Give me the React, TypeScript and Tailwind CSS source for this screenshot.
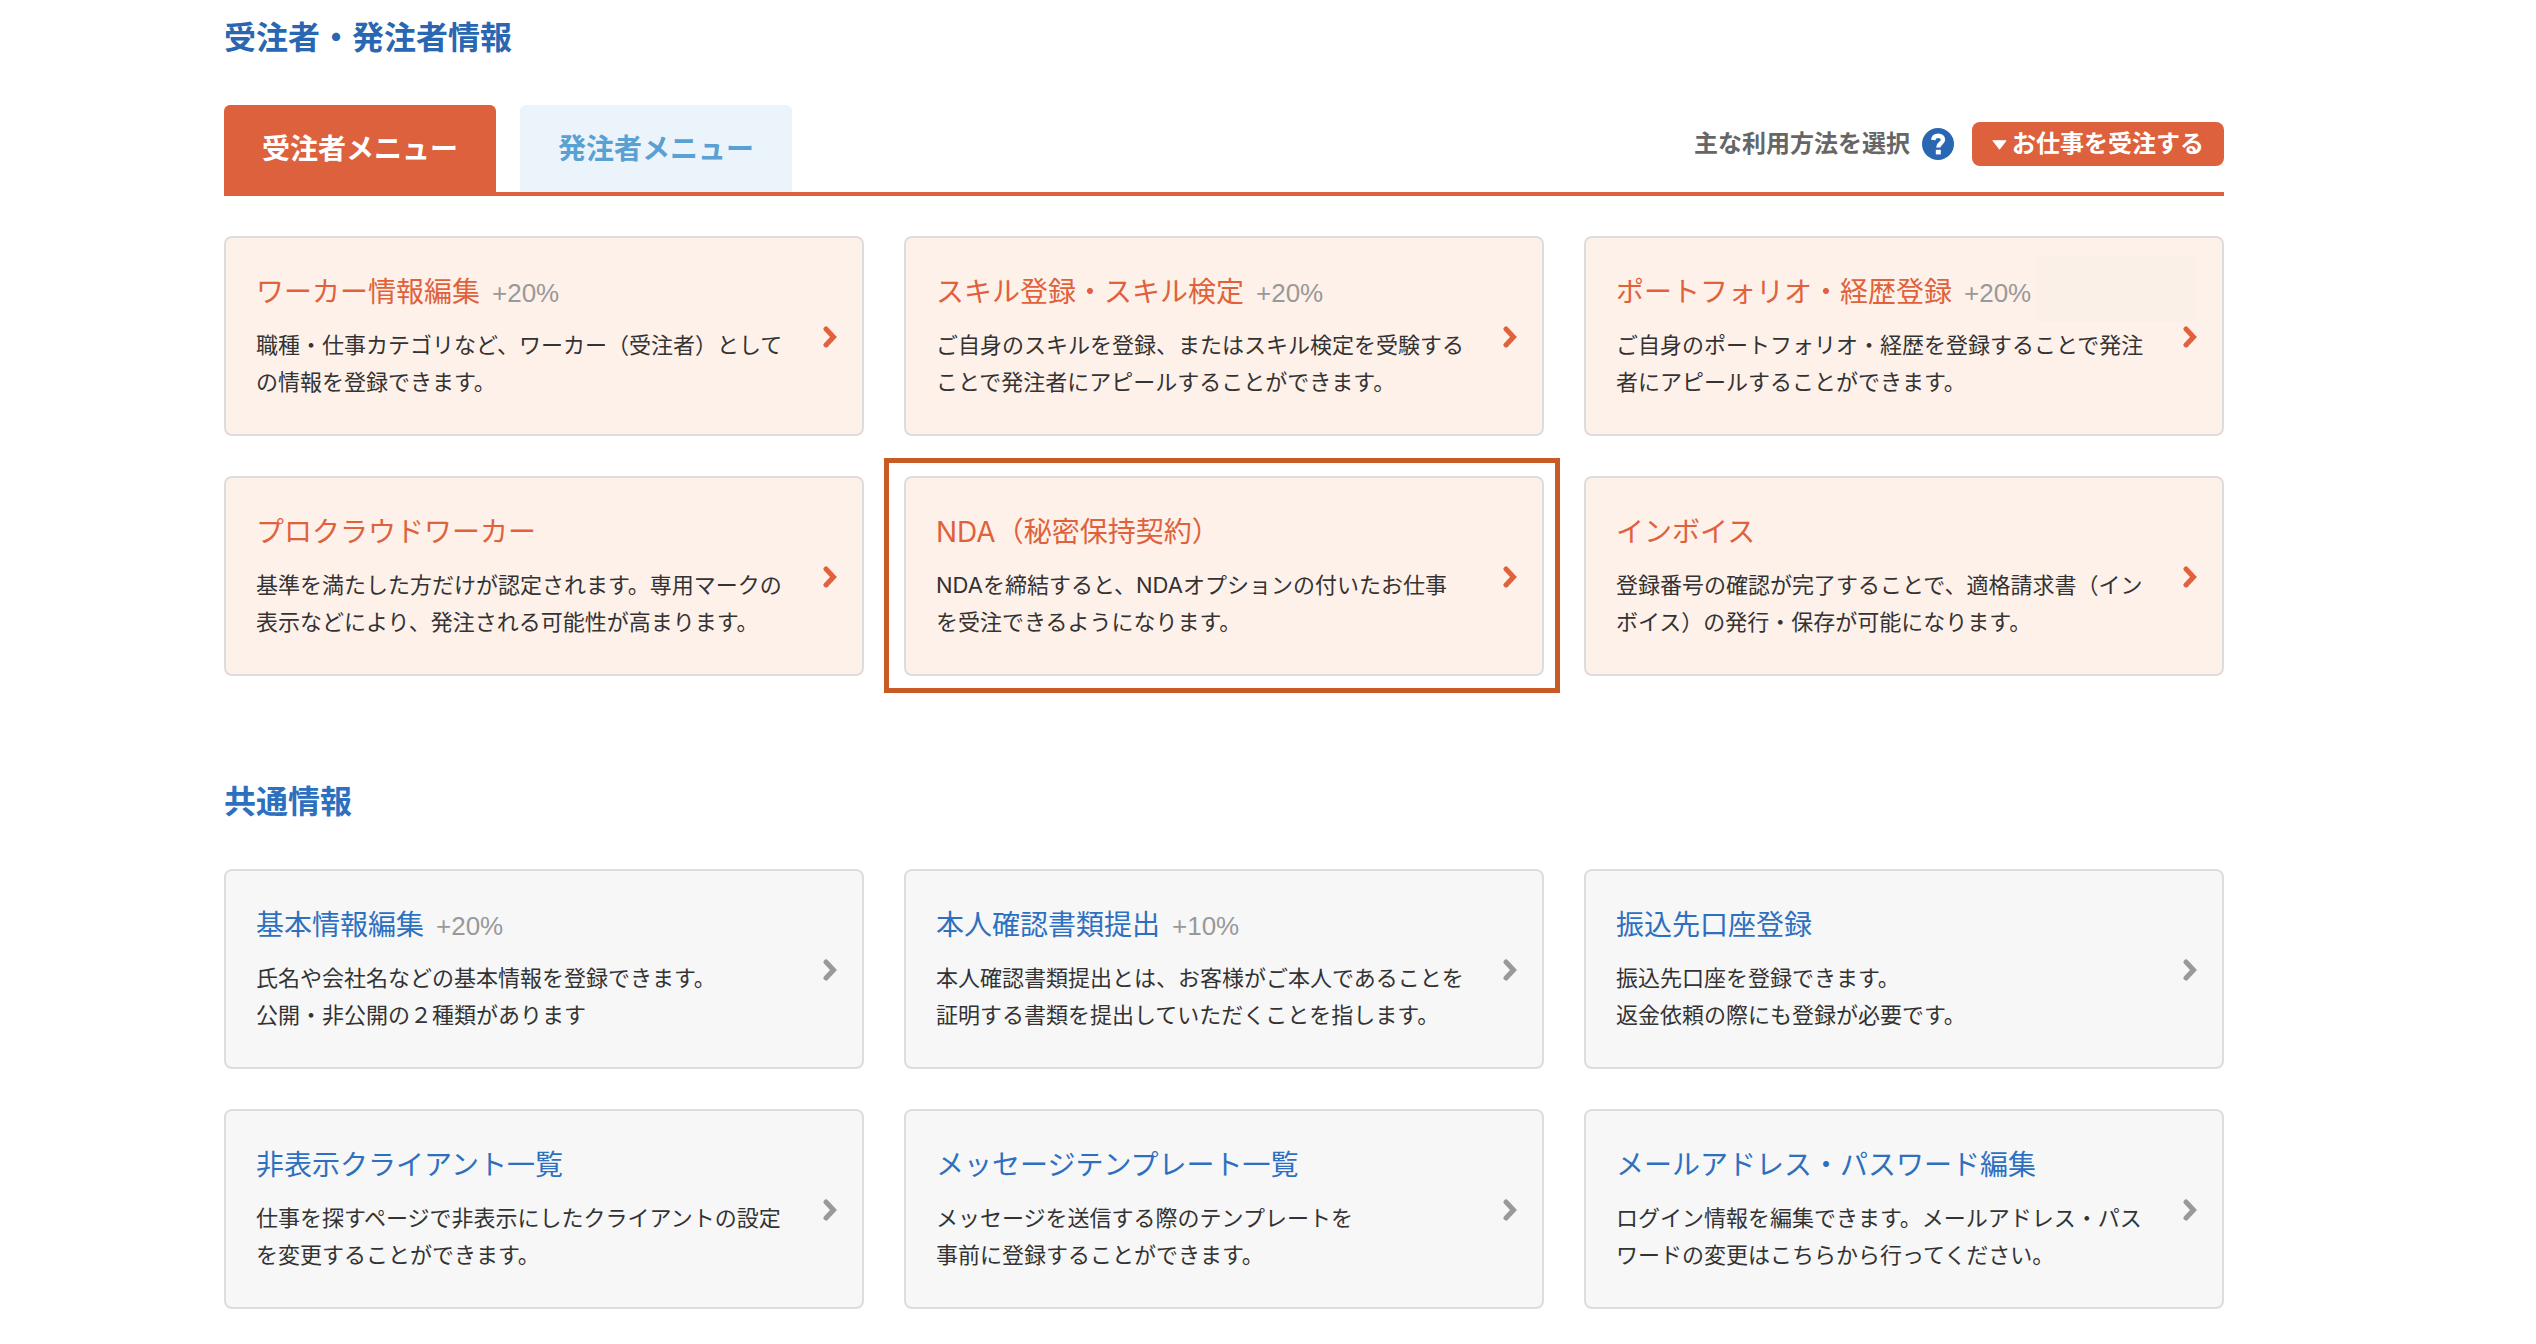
import { useState } from 'react';
import clsx from 'clsx';

type CardItem = {
  title: string;
  lines: string[];
  rate?: string;
  patch?: boolean;
  highlighted?: boolean;
};

const WORKER_ITEMS: CardItem[] = [
  {
    title: 'ワーカー情報編集',
    rate: '+20%',
    lines: ['職種・仕事カテゴリなど、ワーカー（受注者）として', 'の情報を登録できます。'],
  },
  {
    title: 'スキル登録・スキル検定',
    rate: '+20%',
    lines: ['ご自身のスキルを登録、またはスキル検定を受験する', 'ことで発注者にアピールすることができます。'],
  },
  {
    title: 'ポートフォリオ・経歴登録',
    rate: '+20%',
    patch: true,
    lines: ['ご自身のポートフォリオ・経歴を登録することで発注', '者にアピールすることができます。'],
  },
  {
    title: 'プロクラウドワーカー',
    lines: ['基準を満たした方だけが認定されます。専用マークの', '表示などにより、発注される可能性が高まります。'],
  },
  {
    title: 'NDA（秘密保持契約）',
    highlighted: true,
    lines: ['NDAを締結すると、NDAオプションの付いたお仕事', 'を受注できるようになります。'],
  },
  {
    title: 'インボイス',
    lines: ['登録番号の確認が完了することで、適格請求書（イン', 'ボイス）の発行・保存が可能になります。'],
  },
];

const COMMON_ITEMS: CardItem[] = [
  {
    title: '基本情報編集',
    rate: '+20%',
    lines: ['氏名や会社名などの基本情報を登録できます。', '公開・非公開の２種類があります'],
  },
  {
    title: '本人確認書類提出',
    rate: '+10%',
    lines: ['本人確認書類提出とは、お客様がご本人であることを', '証明する書類を提出していただくことを指します。'],
  },
  {
    title: '振込先口座登録',
    lines: ['振込先口座を登録できます。', '返金依頼の際にも登録が必要です。'],
  },
  {
    title: '非表示クライアント一覧',
    lines: ['仕事を探すページで非表示にしたクライアントの設定', 'を変更することができます。'],
  },
  {
    title: 'メッセージテンプレート一覧',
    lines: ['メッセージを送信する際のテンプレートを', '事前に登録することができます。'],
  },
  {
    title: 'メールアドレス・パスワード編集',
    lines: ['ログイン情報を編集できます。メールアドレス・パス', 'ワードの変更はこちらから行ってください。'],
  },
];

const TABS = ['受注者メニュー', '発注者メニュー'];

function Chevron() {
  return (
    <svg viewBox="0 0 14 22" className="w-[14px] h-[22px] shrink-0" fill="none" aria-hidden="true">
      <path d="M3 3 L10.5 11 L3 19" stroke="currentColor" strokeWidth="5" strokeLinecap="round" />
    </svg>
  );
}

function MenuCard({ item, tone }: { item: CardItem; tone: 'orange' | 'gray' }) {
  const orange = tone === 'orange';

  return (
    <li className="relative">
      <a
        href="#"
        className={clsx(
          'flex items-center justify-between h-full rounded-lg border-2 border-[#dddddd] pt-[34px] pb-[33px] pl-[30px] pr-[25px]',
          orange ? 'bg-[#fef1ea]' : 'bg-[#f7f7f7]'
        )}
      >
        <div>
          <h3 className="flex items-baseline gap-3 text-[28px] leading-[40px]">
            <span className={orange ? 'text-[#e0623c]' : 'text-[#2e70c0]'}>{item.title}</span>
            {item.rate && (
              <span className="font-['Liberation_Sans',sans-serif] text-[26px] leading-none text-[#999999]">
                {item.rate}
              </span>
            )}
          </h3>
          <p className="mt-[15px] text-[22px] leading-[37px] text-[#333333]">
            {item.lines[0]}
            <br />
            {item.lines[1]}
          </p>
        </div>
        <span className={orange ? 'text-[#e0623c]' : 'text-[#999999]'}>
          <Chevron />
        </span>
      </a>

      {item.patch && <div className="absolute top-5 right-7 w-40 h-[66px] bg-[#faf0e8]" />}

      {/* Frame around the card */}
      {item.highlighted && (
        <div className="absolute -top-[18px] -bottom-[17px] -left-5 -right-4 border-5 border-[#c85a26] pointer-events-none" />
      )}
    </li>
  );
}

export default function App() {
  const [activeTab, setActiveTab] = useState(TABS[0]);

  return (
    <main className="min-h-screen bg-white pt-4 pb-8 pl-56 pr-78 font-['Inter','Noto_Sans_CJK_JP',sans-serif]">
      <section>
        <h2 className="text-[32px] leading-[44px] font-bold text-[#2a67b2]">受注者・発注者情報</h2>

        {/* Tabs */}
        <div className="mt-[45px] flex items-end justify-between border-b-4 border-[#dd613d]">
          <div role="tablist" className="flex gap-6">
            {TABS.map((tab) => (
              <button
                key={tab}
                type="button"
                role="tab"
                aria-selected={activeTab === tab}
                onClick={() => setActiveTab(tab)}
                className={clsx(
                  'w-[272px] h-[87px] rounded-t-md text-[28px] font-bold',
                  activeTab === tab ? 'bg-[#dd613d] text-white' : 'bg-[#ebf4fa] text-[#5aa1d3]'
                )}
              >
                {tab}
              </button>
            ))}
          </div>

          <div className="flex items-center pb-[26px]">
            <label htmlFor="usage" className="text-[24px] leading-[44px] font-bold text-[#666666]">
              主な利用方法を選択
            </label>
            <button type="button" aria-label="ヘルプ" className="ml-3 mr-[18px]">
              <svg viewBox="0 0 32 32" className="w-8 h-8" fill="none" aria-hidden="true">
                <circle cx="16" cy="16" r="16" fill="#2a67b2" />
                <path
                  d="M11.2 12 C11.6 9 13.4 7.8 16.2 7.8 C19 7.8 21 9.2 21 11.8 C21 15.4 16.3 15.1 16.3 19.4"
                  stroke="white"
                  strokeWidth="4.4"
                />
                <rect x="13.8" y="21.8" width="5" height="4.6" fill="white" />
              </svg>
            </button>
            <div className="relative">
              <select
                id="usage"
                className="appearance-none w-[252px] h-11 pl-10 rounded-lg bg-[#dd613d] text-[24px] leading-[44px] font-bold text-white"
              >
                <option>お仕事を受注する</option>
                <option>お仕事を発注する</option>
              </select>
              <svg
                viewBox="0 0 14 9"
                className="absolute left-5 top-[18px] w-[15px] h-[10px] pointer-events-none"
                aria-hidden="true"
              >
                <path d="M1 0.5 H13 L7 8.2 Z" fill="white" stroke="white" strokeLinejoin="round" />
              </svg>
            </div>
          </div>
        </div>

        <ul className="mt-10 grid grid-cols-3 gap-10">
          {WORKER_ITEMS.map((item) => (
            <MenuCard key={item.title} item={item} tone="orange" />
          ))}
        </ul>
      </section>

      <section className="mt-[104px]">
        <h2 className="text-[32px] leading-[44px] font-bold text-[#2e70c0]">共通情報</h2>

        <ul className="mt-[45px] grid grid-cols-3 gap-10">
          {COMMON_ITEMS.map((item) => (
            <MenuCard key={item.title} item={item} tone="gray" />
          ))}
        </ul>
      </section>
    </main>
  );
}
